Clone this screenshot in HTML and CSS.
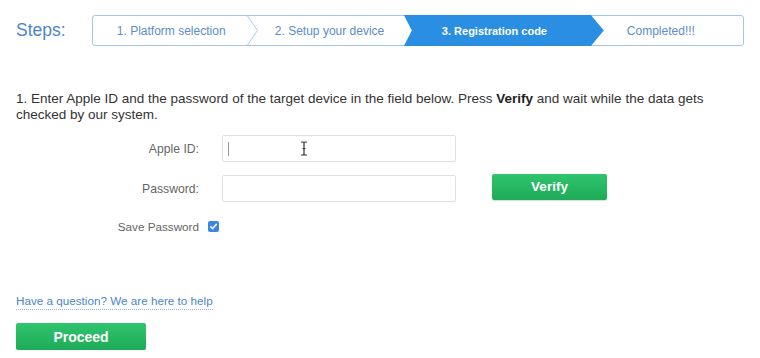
FILE: index.html
```
<!DOCTYPE html>
<html>
<head>
<meta charset="utf-8">
<link rel="stylesheet" href="styles.css">
</head>
<body>
<div class="page">
  <div class="steps-row">
    <div class="steps-label">Steps:</div>
    <div class="steps">
      <div class="step step-1">1. Platform selection</div>
      <div class="step step-2">
        <svg class="chev" width="12" height="29" viewBox="0 0 12 29"><polyline points="0.5,0 10.5,14.5 0.5,29" fill="none" stroke="#a9c8e8" stroke-width="1"/></svg>
        2. Setup your device
      </div>
      <div class="step step-3">3. Registration code</div>
      <div class="step step-4">Completed!!!</div>
    </div>
  </div>

  <p class="intro">1. Enter Apple ID and the password of the target device in the field below. Press <b>Verify</b> and wait while the data gets checked by our system.</p>

  <div class="form">
    <div class="row">
      <label class="label">Apple ID:</label>
      <div class="input">
        <span class="caret"></span>
        <svg class="ibeam" width="8" height="15" viewBox="0 0 8 15"><path d="M1 1 H3 Q4 1 4 2.5 V12.5 Q4 14 3 14 H1 M7 1 H5 Q4 1 4 2.5 M4 12.5 Q4 14 5 14 H7 M2.5 7.5 H5.5" fill="none" stroke="#333" stroke-width="1.2"/></svg>
      </div>
    </div>
    <div class="row row-2">
      <label class="label">Password:</label>
      <div class="input"></div>
      <button class="btn btn-verify">Verify</button>
    </div>
    <div class="row row-3">
      <label class="label label-save">Save Password</label>
      <span class="check"><svg width="11" height="11" viewBox="0 0 11 11"><path d="M2.8 5.8 L4.6 7.6 L8.2 3.4" fill="none" stroke="#fff" stroke-width="1.6" stroke-linecap="round" stroke-linejoin="round"/></svg></span>
    </div>
  </div>

  <a class="help" href="#">Have a question? We are here to help</a>
  <div><button class="btn btn-proceed">Proceed</button></div>
</div>
</body>
</html>
```
FILE: styles.css
```
* { box-sizing: border-box; }
html, body { margin: 0; padding: 0; background: #fff; }
body { font-family: "Liberation Sans", Arial, sans-serif; color: #333; }
.page { padding: 15px 16px 0 16px; }

.steps-row { display: flex; align-items: center; height: 31px; }
.steps-label { width: 77px; font-size: 17.5px; color: #4a87c9; }
.steps {
  display: flex; width: 662px; height: 31px;
  border: 1px solid #a6c6e6; border-radius: 3px; background: #fff;
}
.step {
  display: flex; align-items: center; height: 100%;
  font-size: 12px; color: #5b8dc8; white-space: nowrap;
}
.step-1 { width: 155px; padding-left: 24px; }
.step-2 { width: 156px; padding-left: 27px; position: relative; }
.chev { position: absolute; left: -1px; top: 0; }
.step-3 {
  width: 200px; padding-left: 38px; margin-top: -1px; height: 31px;
  background: #2a8fe2; color: #fff; font-weight: bold; font-size: 11px;
  clip-path: polygon(0 0, 187px 0, 100% 50%, 187px 100%, 0 100%, 8px 50%);
}
.step-4 { flex: 1; padding-left: 23px; }

.intro {
  margin: 45px 0 0 0; width: 712px;
  font-size: 13.5px; line-height: 16px; color: #333;
}
.intro b { font-weight: bold; color: #222; }

.form { margin-top: 12px; }
.row { display: flex; align-items: center; }
.row-2 { margin-top: 13px; }
.row-3 { margin-top: 18px; }
.label { width: 183px; text-align: right; font-size: 12.2px; color: #666; }
.label-save { font-size: 11.7px; }
.input {
  position: relative; margin-left: 23px; width: 234px; height: 27px;
  border: 1px solid #e0e0e0; border-radius: 2px; background: #fff;
}
.caret { position: absolute; left: 5px; top: 6px; width: 1px; height: 14px; background: #999; }
.ibeam { position: absolute; left: 77px; top: 5px; }

.btn {
  border: 0; border-radius: 2px; color: #fff; font-family: "Liberation Sans", Arial, sans-serif;
  font-weight: bold; background: linear-gradient(#2fc46e, #1eab57);
  box-shadow: 0 1px 1px rgba(0,0,0,0.15);
}
.btn-verify { margin-left: 36px; width: 115px; height: 26px; font-size: 13.5px; margin-top: -4px; }
.check {
  margin-left: 9px; width: 11px; height: 11px; border-radius: 2px;
  background: #3a86e0; display: flex;
}
.help {
  display: inline-block; margin-top: 60px; font-size: 11.7px; line-height: 16px;
  color: #4a87c9; text-decoration: none; border-bottom: 1px dotted #8fb2dd;
}
.btn-proceed { margin-top: 13px; width: 130px; height: 27px; font-size: 14px; }
```
